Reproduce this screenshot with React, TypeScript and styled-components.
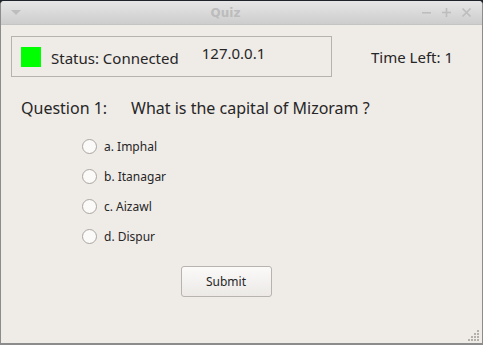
import React, { useState } from "react";
import styled, { createGlobalStyle } from "styled-components";

const GlobalStyle = createGlobalStyle`
  html, body {
    margin: 0;
    padding: 0;
    background: #1f232b;
  }
  body {
    font-family: "Noto Sans", "Open Sans", sans-serif;
  }
`;

const Window = styled.div`
  width: 483px;
  height: 344px;
  margin-top: 1px;
  box-sizing: border-box;
  display: flex;
  flex-direction: column;
  background: #efebe7;
  border-left: 1px solid #8c8c8c;
  border-right: 1px solid #8c8c8c;
  border-bottom: 2px solid #8c8c8c;
  border-radius: 4px 4px 0 0;
  overflow: hidden;
  position: relative;
`;

const TitleBar = styled.div`
  height: 23px;
  flex-shrink: 0;
  display: flex;
  align-items: center;
  justify-content: space-between;
  padding: 0 10px 0 9px;
  background: linear-gradient(#e6e6e6, #cdcdcd);
  border-bottom: 1px solid #c4c4c4;
`;

const TitleText = styled.span`
  font-family: "DejaVu Sans", sans-serif;
  font-weight: bold;
  font-size: 12px;
  color: #bcbcbc;
  margin-left: 8px;
`;

const TitleButtons = styled.div`
  display: flex;
  gap: 9px;
  align-items: center;
`;

const Content = styled.div`
  flex: 1;
  display: flex;
  flex-direction: column;
  padding: 11px 0 0 10px;
`;

const TopRow = styled.div`
  display: flex;
  align-items: center;
`;

const StatusFrame = styled.div`
  width: 321px;
  height: 41px;
  box-sizing: border-box;
  border: 1px solid #b6b2ae;
  display: flex;
  align-items: center;
  padding-left: 9px;
`;

const Led = styled.div<{ $on: boolean }>`
  width: 20px;
  height: 20px;
  background: ${(p) => (p.$on ? "#00ff00" : "#ff0000")};
`;

const StatusText = styled.span`
  font-size: 15px;
  color: #262626;
  margin-left: 10px;
  margin-top: 3px;
`;

const Address = styled.span`
  font-size: 15px;
  color: #262626;
  margin-left: 23px;
  margin-top: -7px;
`;

const TimeLeft = styled.span`
  font-size: 15px;
  color: #262626;
  margin-left: 39px;
`;

const QuestionRow = styled.div`
  display: flex;
  margin-top: 20px;
  padding-left: 10px;
  font-size: 16px;
  color: #262626;
`;

const QuestionLabel = styled.span`
  width: 110px;
`;

const Options = styled.div`
  display: flex;
  flex-direction: column;
  gap: 11px;
  margin-top: 18px;
  padding-left: 71px;
`;

const OptionRow = styled.label`
  display: flex;
  align-items: center;
  height: 19px;
  font-size: 12px;
  color: #262626;
  cursor: pointer;
`;

const RadioCircle = styled.span<{ $checked: boolean }>`
  width: 13px;
  height: 13px;
  border-radius: 50%;
  border: 1px solid #aaa6a2;
  background: #fbfaf9;
  margin-right: 7px;
  display: flex;
  align-items: center;
  justify-content: center;
  &::after {
    content: "";
    width: 5px;
    height: 5px;
    border-radius: 50%;
    background: #333;
    display: ${(p) => (p.$checked ? "block" : "none")};
  }
`;

const ButtonRow = styled.div`
  display: flex;
  justify-content: center;
  margin-top: 20px;
  padding-right: 41px;
`;

const SubmitButton = styled.button`
  width: 91px;
  height: 31px;
  font-family: "Noto Sans", sans-serif;
  font-size: 12px;
  color: #262626;
  border: 1px solid #b7b3af;
  border-radius: 3px;
  background: linear-gradient(#fbfaf9, #ece9e6);
  cursor: pointer;
`;

const Grip = styled.svg`
  position: absolute;
  right: 2px;
  bottom: 1px;
`;

const options = ["a. Imphal", "b. Itanagar", "c. Aizawl", "d. Dispur"];

const App = () => {
  const [selected, setSelected] = useState<number | null>(null);

  return (
    <>
      <GlobalStyle />
      <Window>
        <TitleBar>
          <svg width="12" height="8" viewBox="0 0 12 8">
            <path d="M1 1 L6 6 L11 1 Z" fill="#bdbdbd" />
          </svg>
          <TitleText>Quiz</TitleText>
          <TitleButtons>
            <svg width="11" height="11" viewBox="0 0 11 11">
              <rect x="1" y="5" width="9" height="1.6" fill="#bdbdbd" />
            </svg>
            <svg width="11" height="11" viewBox="0 0 11 11">
              <rect x="1" y="4.7" width="9" height="1.6" fill="#bdbdbd" />
              <rect x="4.7" y="1" width="1.6" height="9" fill="#bdbdbd" />
            </svg>
            <svg width="11" height="11" viewBox="0 0 11 11">
              <path d="M1.5 1.5 L9.5 9.5 M9.5 1.5 L1.5 9.5" stroke="#bdbdbd" strokeWidth="1.7" />
            </svg>
          </TitleButtons>
        </TitleBar>
        <Content>
          <TopRow>
            <StatusFrame>
              <Led $on />
              <StatusText>Status: Connected</StatusText>
              <Address>127.0.0.1</Address>
            </StatusFrame>
            <TimeLeft>Time Left: 1</TimeLeft>
          </TopRow>
          <QuestionRow>
            <QuestionLabel>Question 1:</QuestionLabel>
            <span>What is the capital of Mizoram ?</span>
          </QuestionRow>
          <Options>
            {options.map((o, i) => (
              <OptionRow key={o} onClick={() => setSelected(i)}>
                <RadioCircle $checked={selected === i} />
                {o}
              </OptionRow>
            ))}
          </Options>
          <ButtonRow>
            <SubmitButton>Submit</SubmitButton>
          </ButtonRow>
        </Content>
        <Grip width="12" height="12" viewBox="0 0 12 12">
          {[
            [9, 0], [6, 3], [9, 3], [3, 6], [6, 6], [9, 6], [0, 9], [3, 9], [6, 9], [9, 9],
          ].map(([x, y]) => (
            <rect key={`${x}-${y}`} x={x} y={y} width="2" height="2" fill="#b3afab" />
          ))}
        </Grip>
      </Window>
    </>
  );
};

export default App;
